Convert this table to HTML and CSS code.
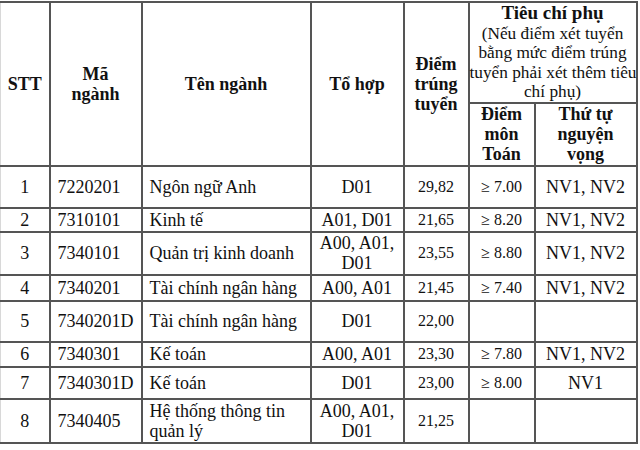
FILE: index.html
```html
<!DOCTYPE html>
<html lang="vi">
<head>
<meta charset="utf-8">
<title>Điểm trúng tuyển</title>
<link rel="stylesheet" href="styles.css">
</head>
<body>
<table class="tbl">
  <colgroup>
    <col class="c-stt"><col class="c-ma"><col class="c-ten"><col class="c-to"><col class="c-diem"><col class="c-toan"><col class="c-nv">
  </colgroup>
  <thead>
    <tr class="h1">
      <th rowspan="2" class="first">STT</th>
      <th rowspan="2">Mã<br>ngành</th>
      <th rowspan="2">Tên ngành</th>
      <th rowspan="2">Tổ hợp</th>
      <th rowspan="2">Điểm<br>trúng<br>tuyển</th>
      <th colspan="2" class="tcp"><span class="tcp-title">Tiêu chí phụ</span><br><span class="tcp-note">(Nếu điểm xét tuyển<br>bằng mức điểm trúng<br>tuyển phải xét thêm tiêu<br>chí phụ)</span></th>
    </tr>
    <tr class="h2">
      <th>Điểm<br>môn<br>Toán</th>
      <th>Thứ tự<br>nguyện<br>vọng</th>
    </tr>
  </thead>
  <tbody>
    <tr class="r1">
      <td class="first">1</td><td class="l">7220201</td><td class="l">Ngôn ngữ Anh</td><td>D01</td><td class="num">29,82</td><td class="num">≥ 7.00</td><td>NV1, NV2</td>
    </tr>
    <tr class="r2">
      <td class="first">2</td><td class="l">7310101</td><td class="l">Kinh tế</td><td>A01, D01</td><td class="num">21,65</td><td class="num">≥ 8.20</td><td>NV1, NV2</td>
    </tr>
    <tr class="r3">
      <td class="first">3</td><td class="l">7340101</td><td class="l">Quản trị kinh doanh</td><td>A00, A01, D01</td><td class="num">23,55</td><td class="num">≥ 8.80</td><td>NV1, NV2</td>
    </tr>
    <tr class="r4">
      <td class="first">4</td><td class="l">7340201</td><td class="l">Tài chính ngân hàng</td><td>A00, A01</td><td class="num">21,45</td><td class="num">≥ 7.40</td><td>NV1, NV2</td>
    </tr>
    <tr class="r5">
      <td class="first">5</td><td class="l">7340201D</td><td class="l">Tài chính ngân hàng</td><td>D01</td><td class="num">22,00</td><td></td><td></td>
    </tr>
    <tr class="r6">
      <td class="first">6</td><td class="l">7340301</td><td class="l">Kế toán</td><td>A00, A01</td><td class="num">23,30</td><td class="num">≥ 7.80</td><td>NV1, NV2</td>
    </tr>
    <tr class="r7">
      <td class="first">7</td><td class="l">7340301D</td><td class="l">Kế toán</td><td>D01</td><td class="num">23,00</td><td class="num">≥ 8.00</td><td>NV1</td>
    </tr>
    <tr class="r8">
      <td class="first">8</td><td class="l">7340405</td><td class="l">Hệ thống thông tin quản lý</td><td>A00, A01, D01</td><td class="num">21,25</td><td></td><td></td>
    </tr>
  </tbody>
</table>
</body>
</html>
```
FILE: styles.css
```css
html, body {
  margin: 0;
  padding: 0;
  background: #ffffff;
}

.tbl {
  border-collapse: collapse;
  table-layout: fixed;
  width: 637px;
  margin-top: 1px;
  font-family: "Liberation Serif", "Times New Roman", serif;
  font-size: 18px;
  line-height: 20px;
  color: #111111;
}

.c-stt { width: 49px; }
.c-ma { width: 92px; }
.c-ten { width: 169px; }
.c-to { width: 93px; }
.c-diem { width: 65px; }
.c-toan { width: 66px; }
.c-nv { width: 102px; }

.tbl th,
.tbl td {
  border: 2px solid #555555;
  padding: 0 4px;
  vertical-align: middle;
  text-align: center;
}

.tbl th {
  font-weight: bold;
}

.tbl .first {
  border-left: 1px solid #d8d8d8;
}

.tbl td.l {
  text-align: left;
  padding-left: 7px;
}

.tbl td.num {
  font-size: 16px;
}

.tbl th.tcp {
  padding: 0;
  line-height: 19.5px;
  white-space: nowrap;
}

.tcp-title {
  font-size: 19px;
}

.tcp-note {
  font-weight: normal;
  font-size: 17.3px;
}

.h1 { height: 100px; }
.h2 { height: 63px; }
.r1 { height: 42px; }
.r2 { height: 24px; }
.r3 { height: 43px; }
.r4 { height: 26px; }
.r5 { height: 41px; }
.r6 { height: 25px; }
.r7 { height: 32px; }
.r8 { height: 44px; }
```
